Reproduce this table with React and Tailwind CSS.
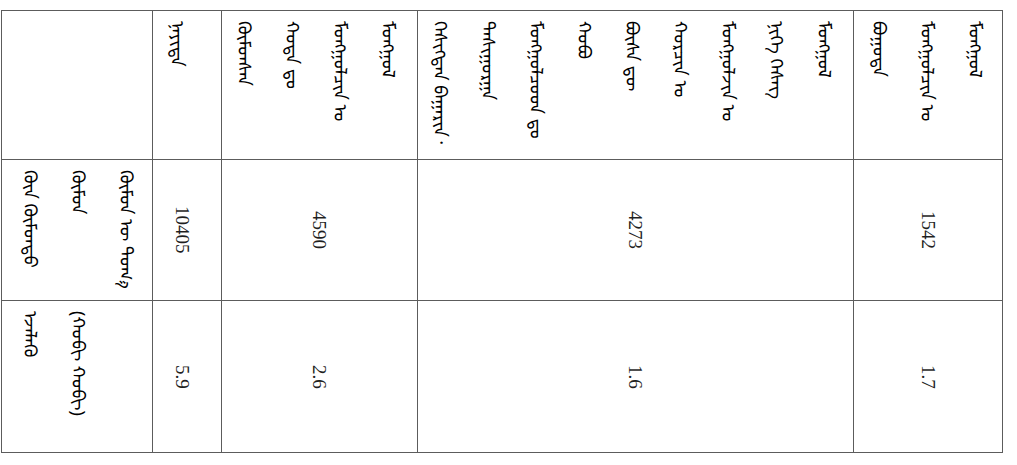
const mn = { fontFamily: '"Noto Sans Mongolian", "Mongolian Baiti", "Noto Sans", sans-serif' }

const headers = [
  { lines: [] },
  { lines: ['ᠨᠡᠶᠢᠲᠡ'], shift: 'pr-[12px]' },
  { lines: ['ᠬᠦᠮᠦᠨᠰᠡᠨ', 'ᠬᠣᠲᠠ ᠳᠤ', 'ᠮᠣᠩᠭᠣᠯᠴᠢᠨ ᠤ', 'ᠮᠣᠩᠭᠣᠯ'] },
  {
    lines: [
      'ᠬᠡᠰᠢᠭᠲᠡᠨ ᠪᠠᠭᠠᠷᠢᠨ᠂',
      'ᠲᠠᠰᠢᠭᠤᠷᠭᠠ',
      'ᠮᠣᠩᠭᠣᠯᠴᠤᠳ ᠳᠤ',
      'ᠬᠣᠪᠣ',
      'ᠪᠦᠰᠡ ᠳᠦ',
      'ᠬᠣᠷᠴᠢᠨ ᠤ',
      'ᠮᠣᠩᠭᠣᠯᠵᠢᠨ ᠤ',
      'ᠨᠢᠭᠡ ᠬᠡᠰᠡᠭ',
      'ᠮᠣᠩᠭᠣᠯ',
    ],
  },
  { lines: ['ᠪᠣᠭᠣᠳᠠ', 'ᠮᠣᠩᠭᠣᠯᠴᠢᠨ ᠤ', 'ᠮᠣᠩᠭᠣᠯ'], shift: 'pl-[6px]' },
]

const rows = [
  { label: ['ᠬᠦᠨ ᠬᠦᠮᠦᠨᠳᠦ', 'ᠬᠦᠮᠦᠨ', 'ᠬᠦᠮᠦᠨ ᠦ ᠲᠣᠭ᠎ᠠ'], values: ['10405', '4590', '4273', '1542'], h: 'h-[141px]' },
  { label: ['ᠡᠵᠡᠯᠡᠬᠦ', '(ᠬᠤᠪᠢ ᠬᠤᠪᠢ)'], values: ['5.9', '2.6', '1.6', '1.7'], h: 'h-[152px]' },
]

function VText({ lines }) {
  return (
    <div className="[writing-mode:vertical-lr] whitespace-pre text-[18px] leading-[48px] text-black" style={mn}>
      {lines.join('\n')}
    </div>
  )
}

export default function App() {
  return (
    <div className="w-[1017px] h-[465px] bg-white pt-[10px] pl-[1px]">
      <table className="border-collapse table-fixed w-[1001px]">
        <colgroup>
          <col className="w-[151px]" />
          <col className="w-[69px]" />
          <col className="w-[196px]" />
          <col className="w-[436px]" />
          <col className="w-[149px]" />
        </colgroup>
        <tbody>
          <tr className="h-[149px]">
            {headers.map((c, i) => (
              <td key={i} className="border-[1.5px] border-[#5c5c5c] p-0 align-top">
                <div className={`flex justify-center pt-[10px] h-[146px] ${c.shift || ''}`}>
                  {c.lines.length > 0 && <VText lines={c.lines} />}
                </div>
              </td>
            ))}
          </tr>
          {rows.map((r, ri) => (
            <tr key={ri} className={r.h}>
              <td className="border-[1.5px] border-[#5c5c5c] p-0 align-top">
                <div className="flex justify-start pl-[8px] pt-[10px]">
                  <VText lines={r.label} />
                </div>
              </td>
              {r.values.map((v, vi) => (
                <td key={vi} className="border-[1.5px] border-[#5c5c5c] p-0 align-middle">
                  <div className={`flex justify-center items-center ${vi === 0 ? 'pr-[10px]' : ''}`}>
                    <span
                      className="[writing-mode:vertical-lr] text-[19px] leading-none text-[#1f1f1f]"
                      style={{ fontFamily: '"Liberation Serif", serif' }}
                    >
                      {v}
                    </span>
                  </div>
                </td>
              ))}
            </tr>
          ))}
        </tbody>
      </table>
    </div>
  )
}
